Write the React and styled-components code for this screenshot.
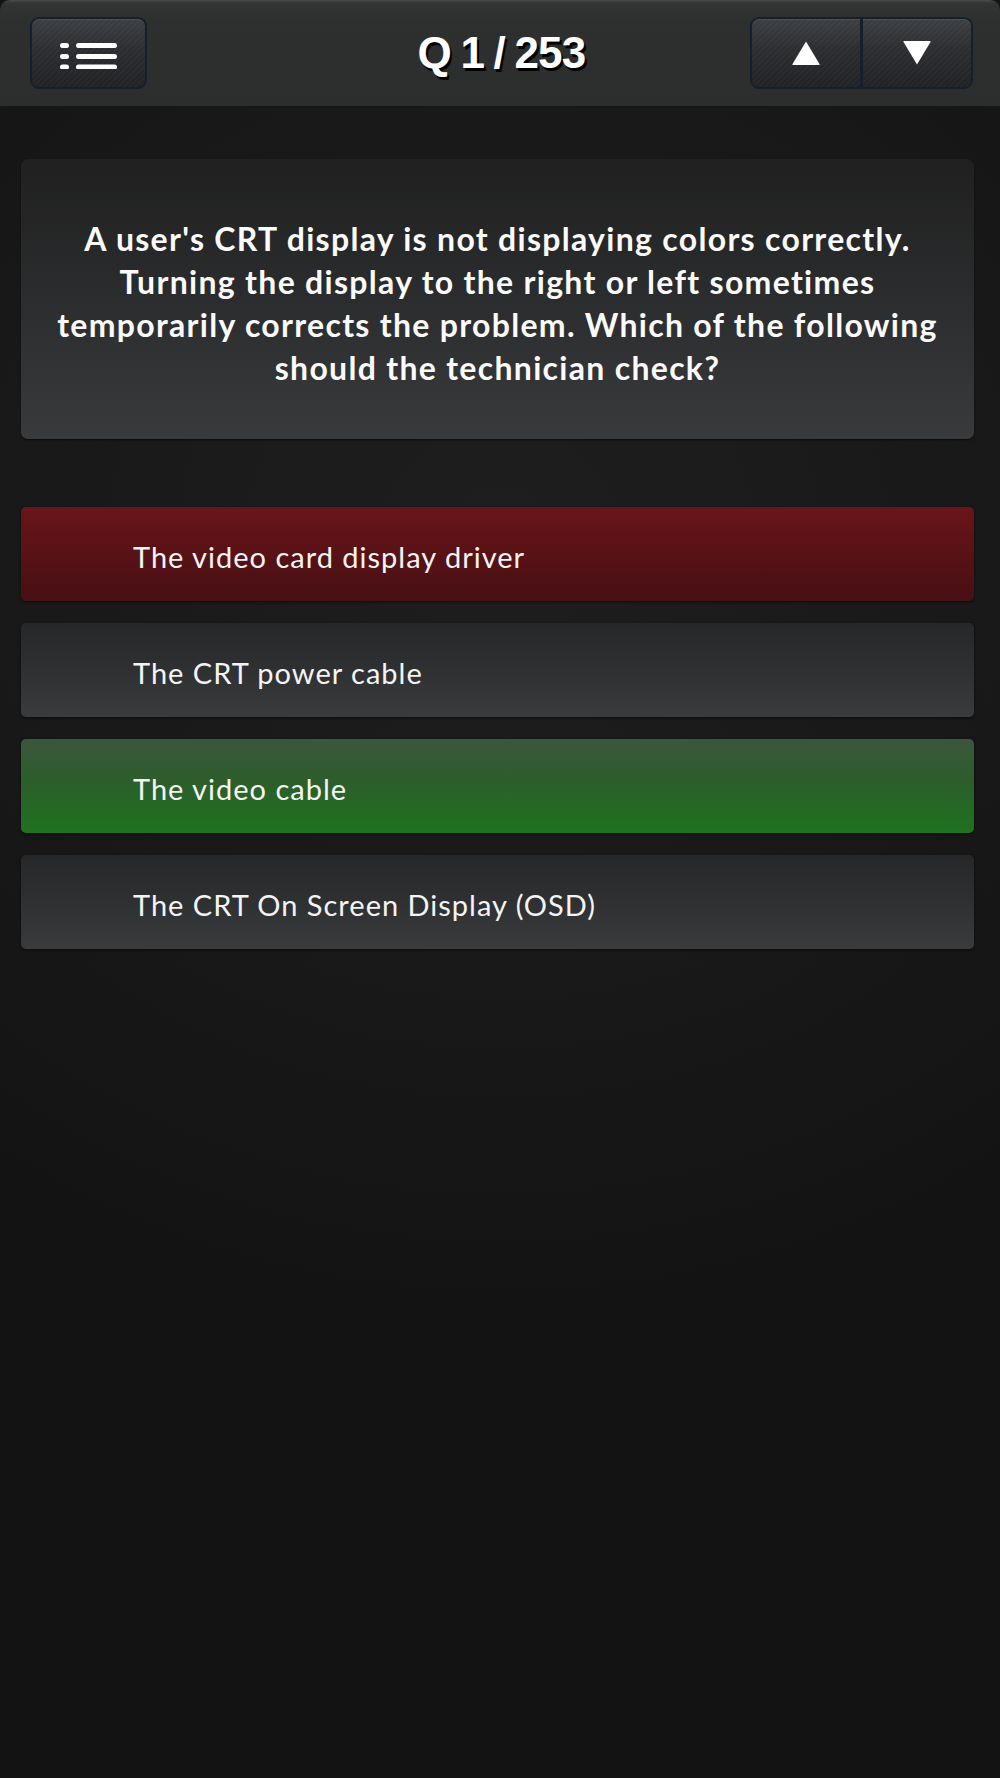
import React from 'react';
import styled, { createGlobalStyle } from 'styled-components';

const GlobalStyle = createGlobalStyle`
  html, body {
    margin: 0;
    padding: 0;
    background: #000;
  }
  * { box-sizing: border-box; }
`;

const answers = [
  { text: 'The video card display driver', state: 'wrong' },
  { text: 'The CRT power cable', state: 'plain' },
  { text: 'The video cable', state: 'right' },
  { text: 'The CRT On Screen Display (OSD)', state: 'plain' },
];

const question =
  "A user's CRT display is not displaying colors correctly. Turning the display to the right or left sometimes temporarily corrects the problem. Which of the following should the technician check?";

const answerBg = {
  wrong: 'linear-gradient(180deg, #6a1519 0%, #5a1216 45%, #461014 100%)',
  right: 'linear-gradient(180deg, #3c563c 0%, #2c5e2b 45%, #1f721f 100%)',
  plain: 'linear-gradient(180deg, #262728 0%, #2f3031 50%, #3a3b3d 100%)',
};

export default function App() {
  return (
    <>
      <GlobalStyle />
      <Screen>
        <TopBar>
          <NavButton aria-label="menu">
            <svg width="58" height="30" viewBox="0 0 58 30">
              <rect x="0" y="4" width="9" height="5" rx="2.5" fill="#fff" />
              <rect x="0" y="15" width="9" height="5" rx="2.5" fill="#fff" />
              <rect x="0" y="25.5" width="9" height="5" rx="2.5" fill="#fff" />
              <rect x="16" y="4" width="41" height="5" rx="2.5" fill="#fff" />
              <rect x="16" y="15" width="41" height="5" rx="2.5" fill="#fff" />
              <rect x="16" y="25.5" width="41" height="5" rx="2.5" fill="#fff" />
            </svg>
          </NavButton>
          <Title>Q 1 / 253</Title>
          <ArrowGroup>
            <ArrowButton aria-label="previous">
              <svg width="30" height="26" viewBox="0 0 30 26">
                <path d="M15 1.5 L28.5 24 Q29 25 28 25 L2 25 Q1 25 1.5 24 Z" fill="#fff" />
              </svg>
            </ArrowButton>
            <ArrowButton aria-label="next">
              <svg width="30" height="26" viewBox="0 0 30 26">
                <path d="M15 24.5 L28.5 2 Q29 1 28 1 L2 1 Q1 1 1.5 2 Z" fill="#fff" />
              </svg>
            </ArrowButton>
          </ArrowGroup>
        </TopBar>

        <Content>
          <QuestionCard>
            <QuestionText>{question}</QuestionText>
          </QuestionCard>

          <AnswerList>
            {answers.map((a) => (
              <Answer key={a.text} $state={a.state}>
                {a.text}
              </Answer>
            ))}
          </AnswerList>
        </Content>
      </Screen>
    </>
  );
}

const Screen = styled.div`
  width: 1000px;
  min-height: 1778px;
  display: flex;
  flex-direction: column;
  background: radial-gradient(ellipse 90% 45% at 50% 30%, #1e1e1e 0%, #181818 60%, #131313 100%);
`;

const TopBar = styled.header`
  height: 106px;
  display: grid;
  grid-template-columns: 1fr auto 1fr;
  align-items: center;
  padding: 0 27px 0 30px;
  border-radius: 10px 10px 0 0;
  background: linear-gradient(180deg, #4a4b4b 0px, #333434 3px, #2e2f2f 20px, #2c2d2d 100%);
  box-shadow: 0 1px 0 #161616;
`;

const buttonLook = `
  height: 72px;
  display: flex;
  align-items: center;
  justify-content: center;
  border: 2px solid #14202b;
  background:
    repeating-linear-gradient(135deg, rgba(255,255,255,0.025) 0 2px, rgba(0,0,0,0) 2px 4px),
    linear-gradient(180deg, #3e3f42 0%, #2c2d30 45%, #212225 100%);
  box-shadow: inset 0 1px 0 rgba(255,255,255,0.08);
  padding: 0;
  cursor: pointer;
`;

const NavButton = styled.button`
  ${buttonLook}
  width: 117px;
  border-radius: 9px;
  justify-self: start;
  svg { margin-top: 1px; }
`;

const Title = styled.h1`
  margin: 0;
  font-family: "Liberation Sans", Arial, sans-serif;
  font-weight: 700;
  font-size: 44px;
  letter-spacing: -0.8px;
  word-spacing: -2px;
  color: #fff;
  text-shadow: 2px 3px 0 #000;
`;

const ArrowGroup = styled.div`
  display: flex;
  width: 223px;
  justify-self: end;
`;

const ArrowButton = styled.button`
  ${buttonLook}
  flex: 1;
  &:first-child {
    border-radius: 9px 0 0 9px;
    border-right-width: 2px;
  }
  &:last-child {
    border-radius: 0 9px 9px 0;
    border-left-width: 1px;
  }
`;

const Content = styled.main`
  display: flex;
  flex-direction: column;
  padding: 53px 26px 0 21px;
`;

const QuestionCard = styled.section`
  height: 280px;
  display: flex;
  align-items: center;
  justify-content: center;
  padding: 8px 20px 0;
  border-radius: 7px;
  background: linear-gradient(180deg, #202020 0%, #2a2b2c 45%, #393a3c 100%);
  box-shadow: 0 1px 2px rgba(0, 0, 0, 0.6);
`;

const QuestionText = styled.p`
  margin: 0;
  text-align: center;
  font-family: "Lato", "Open Sans", sans-serif;
  font-weight: 700;
  font-size: 32px;
  line-height: 43px;
  letter-spacing: 1.3px;
  color: #fafafa;
`;

const AnswerList = styled.div`
  display: flex;
  flex-direction: column;
  gap: 22px;
  margin-top: 68px;
`;

const Answer = styled.div`
  height: 94px;
  display: flex;
  align-items: center;
  padding: 4px 0 0 112px;
  border-radius: 5px;
  background: ${(p) => answerBg[p.$state]};
  box-shadow: 0 1px 3px rgba(0, 0, 0, 0.55);
  font-family: "Lato", "Open Sans", sans-serif;
  font-size: 29px;
  letter-spacing: 1px;
  color: #f4f4f4;
`;
